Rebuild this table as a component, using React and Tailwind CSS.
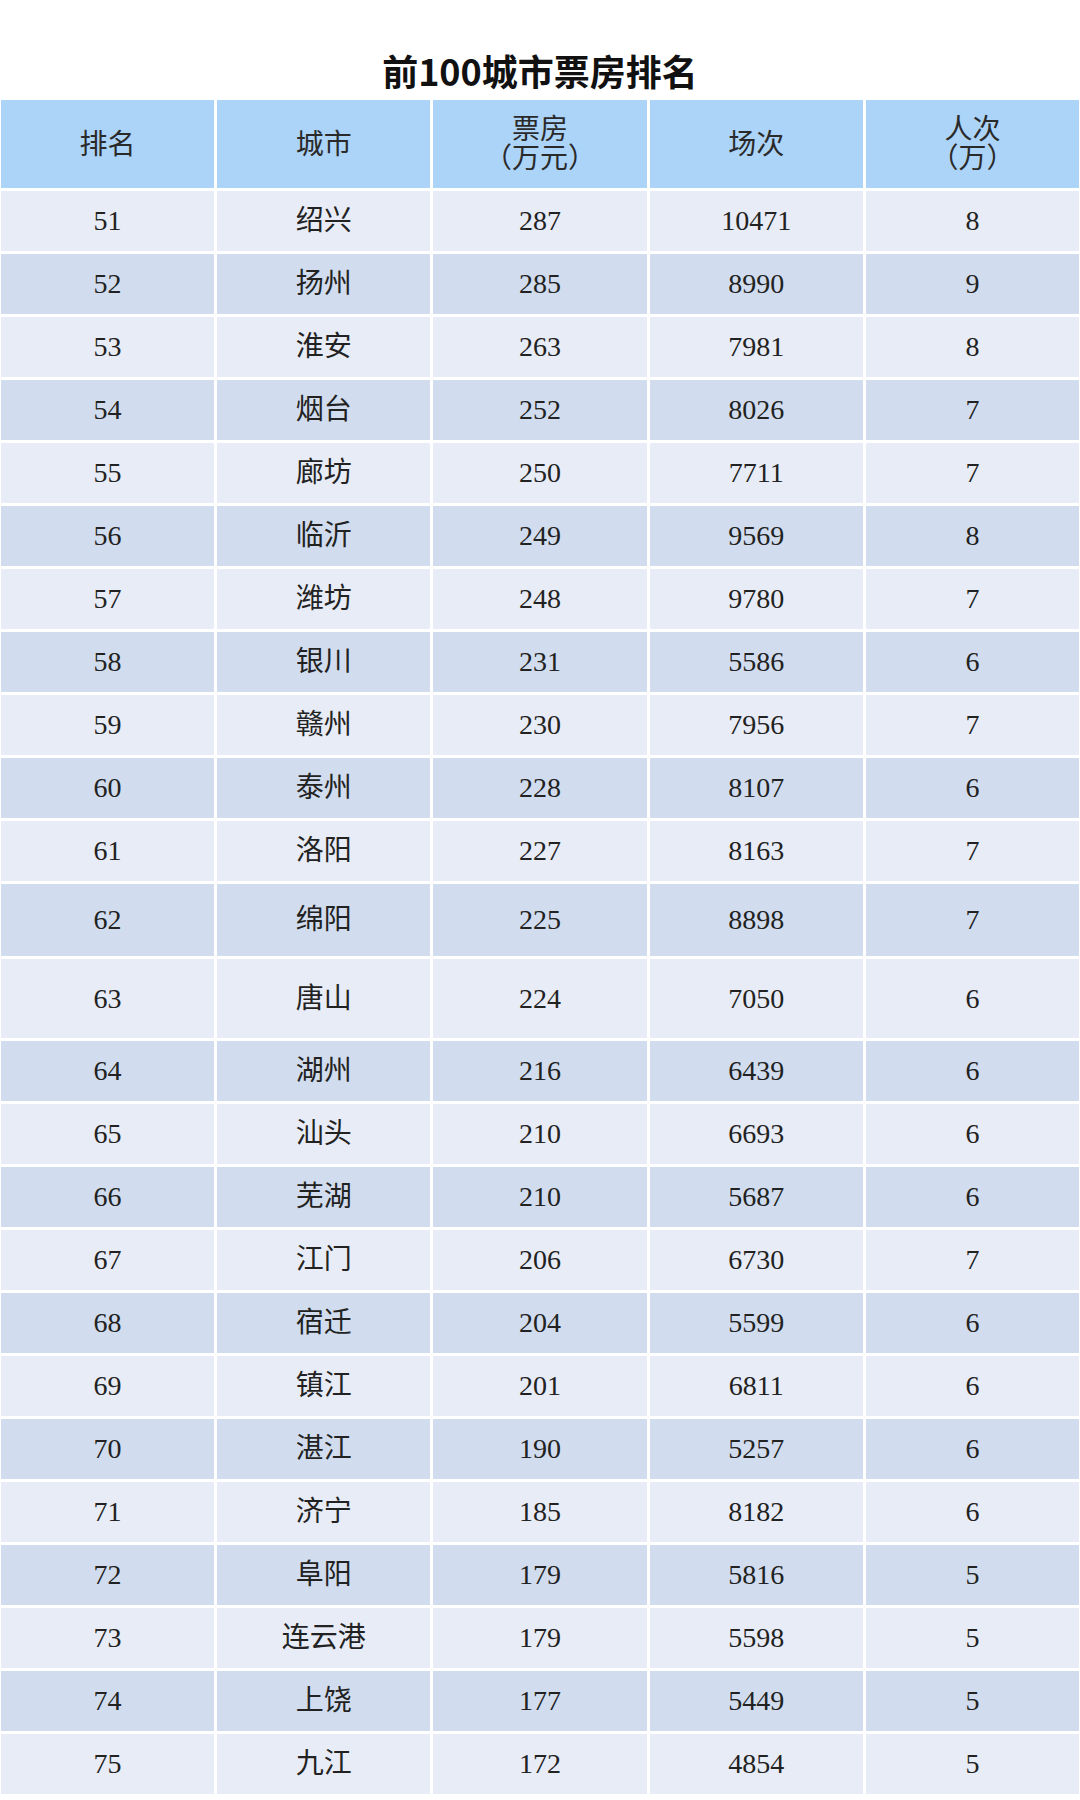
const rows = [
  ["51", "绍兴", "287", "10471", "8"],
  ["52", "扬州", "285", "8990", "9"],
  ["53", "淮安", "263", "7981", "8"],
  ["54", "烟台", "252", "8026", "7"],
  ["55", "廊坊", "250", "7711", "7"],
  ["56", "临沂", "249", "9569", "8"],
  ["57", "潍坊", "248", "9780", "7"],
  ["58", "银川", "231", "5586", "6"],
  ["59", "赣州", "230", "7956", "7"],
  ["60", "泰州", "228", "8107", "6"],
  ["61", "洛阳", "227", "8163", "7"],
  ["62", "绵阳", "225", "8898", "7"],
  ["63", "唐山", "224", "7050", "6"],
  ["64", "湖州", "216", "6439", "6"],
  ["65", "汕头", "210", "6693", "6"],
  ["66", "芜湖", "210", "5687", "6"],
  ["67", "江门", "206", "6730", "7"],
  ["68", "宿迁", "204", "5599", "6"],
  ["69", "镇江", "201", "6811", "6"],
  ["70", "湛江", "190", "5257", "6"],
  ["71", "济宁", "185", "8182", "6"],
  ["72", "阜阳", "179", "5816", "5"],
  ["73", "连云港", "179", "5598", "5"],
  ["74", "上饶", "177", "5449", "5"],
  ["75", "九江", "172", "4854", "5"],
];

// rows 62 and 63 are taller in the source sheet
const rowHeight = (rank) => {
  if (rank === "62") return "h-[72px]";
  if (rank === "63") return "h-[79px]";
  return "h-[60px]";
};

const HeaderCell = ({ children }) => (
  <div className="h-[88px] bg-[#acd4f8] flex flex-col items-center justify-center text-[28px] leading-[29px] text-[#2a2a2a]">
    {children}
  </div>
);

// full-width brackets, kept at a full em like in the sheet
const Unit = ({ text }) => (
  <span className="flex">
    <span className="inline-block w-[28px] text-right">（</span>
    <span>{text}</span>
    <span className="inline-block w-[28px] text-left">）</span>
  </span>
);

const App = () => {
  return (
    <div
      className="w-[1080px] h-[1800px] bg-white overflow-hidden"
      style={{ fontFamily: '"Liberation Serif", "Noto Sans CJK SC", serif' }}
    >
      {/* Title */}
      <div className="h-[100px] flex items-end justify-center pb-[12px]">
        <h1
          className="text-[36px] leading-none font-bold text-[#111]"
          style={{ fontFamily: '"Noto Sans CJK SC", "Noto Sans", sans-serif' }}
        >
          前100城市票房排名
        </h1>
      </div>

      {/* Table */}
      <div className="grid grid-cols-5 gap-[3px] px-[1px]">
        <HeaderCell>排名</HeaderCell>
        <HeaderCell>城市</HeaderCell>
        <HeaderCell>
          <span>票房</span>
          <Unit text="万元" />
        </HeaderCell>
        <HeaderCell>场次</HeaderCell>
        <HeaderCell>
          <span>人次</span>
          <Unit text="万" />
        </HeaderCell>

        {rows.map((row, i) =>
          row.map((cell, j) => (
            <div
              key={`${i}-${j}`}
              className={`${rowHeight(row[0])} ${
                i % 2 === 0 ? "bg-[#e8ecf6]" : "bg-[#d1ddee]"
              } flex items-center justify-center text-[28px] text-[#222]`}
            >
              {cell}
            </div>
          ))
        )}
      </div>
    </div>
  );
};

export default App;
